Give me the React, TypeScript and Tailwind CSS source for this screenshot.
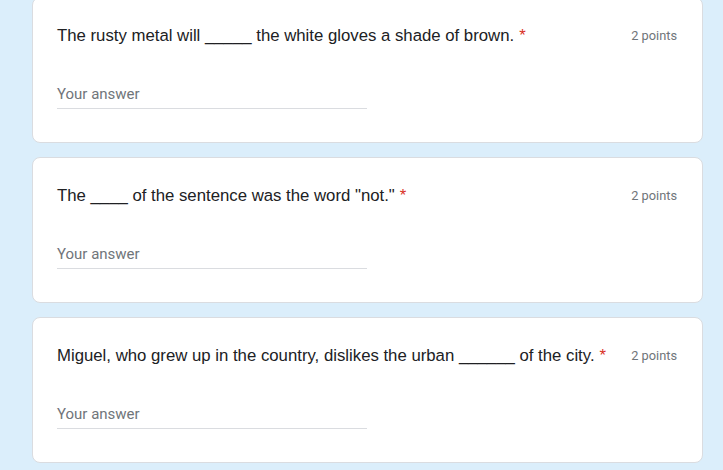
const questions = [
  { text: 'The rusty metal will _____ the white gloves a shade of brown.', points: 2 },
  { text: 'The ____ of the sentence was the word "not."', points: 2 },
  { text: 'Miguel, who grew up in the country, dislikes the urban ______ of the city.', points: 2 },
]

function QuestionCard({ text, points }: { text: string; points: number }) {
  return (
    <div className="h-[146px] shrink-0 rounded-lg border border-[#dadce0] bg-white pl-6 pr-[25px] pt-[26px]">
      <div className="flex items-start justify-between">
        <div className="font-['Liberation_Sans',Arial,sans-serif] text-[16.75px] leading-6 text-[#202124]">
          {text}
          <span className="ml-[5px] text-[#d93025]">*</span>
        </div>
        <div className="pt-[2px] font-['Roboto',sans-serif] text-[12.8px] leading-5 text-[#70757a] whitespace-nowrap">
          {points} points
        </div>
      </div>
      <div className="mt-9 w-[310px] border-b border-[#dadce0] pb-1 font-['Roboto',sans-serif] text-[15px] leading-5 text-[#70757a]">
        Your answer
      </div>
    </div>
  )
}

export default function App() {
  return (
    <div className="h-[470px] w-[723px] overflow-hidden bg-[#dbeefb]">
      <div className="ml-8 mr-5 -mt-[3px] flex flex-col gap-[14px]">
        {questions.map((q, i) => (
          <QuestionCard key={i} text={q.text} points={q.points} />
        ))}
      </div>
    </div>
  )
}
